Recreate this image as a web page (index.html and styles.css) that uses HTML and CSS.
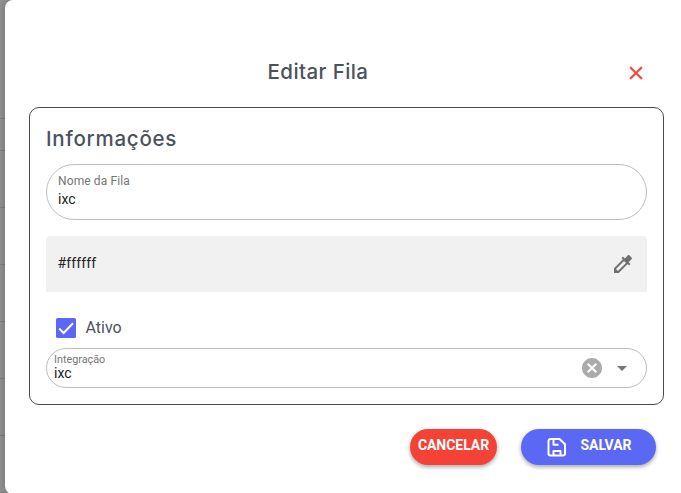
FILE: index.html
```html
<!DOCTYPE html>
<html lang="pt-BR">
<head>
<meta charset="utf-8">
<title>Editar Fila</title>
<link rel="stylesheet" href="styles.css">
</head>
<body>
<div class="backdrop">
  <div class="rows"><i class="head"></i><i class="sub"></i><i></i><i></i><i></i><i></i><i></i><i></i></div>
  <main class="dialog">
    <header class="header">
      <h1>Editar Fila</h1>
      <svg class="close" viewBox="0 0 24 24"><path d="M19 6.41 17.59 5 12 10.59 6.41 5 5 6.41 10.59 12 5 17.59 6.41 19 12 13.41 17.59 19 19 17.59 13.41 12z"/></svg>
    </header>
    <section class="card">
      <h2>Informações</h2>
      <div class="field name">
        <label>Nome da Fila</label>
        <span>ixc</span>
      </div>
      <div class="color">
        <span>#ffffff</span>
        <svg viewBox="0 0 24 24"><path d="M20.71 5.63l-2.34-2.34a1 1 0 0 0-1.41 0l-3.12 3.12-1.93-1.91-1.41 1.41 1.42 1.42L3 16.25V21h4.75l8.92-8.92 1.42 1.42 1.41-1.41-1.92-1.92 3.12-3.12c.4-.4.4-1.03.01-1.42zM6.92 19L5 17.08l8.06-8.06 1.92 1.92L6.92 19z"/></svg>
      </div>
      <div class="check">
        <svg viewBox="0 0 20 20"><rect width="20" height="20" rx="1.5"/><path d="M3.2 10.5 7.6 15 17 5.2"/></svg>
        <span>Ativo</span>
      </div>
      <div class="field select">
        <div class="value">
          <label>Integração</label>
          <span>ixc</span>
        </div>
        <svg class="clear" viewBox="0 0 24 24"><path d="M12 2C6.47 2 2 6.47 2 12s4.47 10 10 10 10-4.47 10-10S17.53 2 12 2zm5 13.59L15.59 17 12 13.41 8.41 17 7 15.59 10.59 12 7 8.41 8.41 7 12 10.59 15.59 7 17 8.41 13.41 12 17 15.59z"/></svg>
        <svg class="arrow" viewBox="0 0 24 24"><path d="M7 10l5 5 5-5z"/></svg>
      </div>
    </section>
    <footer class="actions">
      <button class="cancel">CANCELAR</button>
      <button class="save">
        <svg viewBox="0 0 20 20"><path d="M3.5 2H12.5L18 7.2V16.5a2 2 0 0 1-2 2H3.5a2 2 0 0 1-2-2V4a2 2 0 0 1 2-2zM6.5 2V7.8H11.5M6.5 18V14H13.5V18"/></svg>
        <span>SALVAR</span>
      </button>
    </footer>
  </main>
</div>
</body>
</html>
```
FILE: styles.css
```css
* { box-sizing: border-box; }
body { margin: 0; overflow: hidden; font-family: Roboto, sans-serif; color: #212121; }
.backdrop { display: flex; width: 688px; height: 493px; background: #929292; }
.rows { width: 5px; flex: none; }
.rows i { display: block; height: 57px; border-bottom: 1px solid #7f7f7f; }
.rows .head { height: 119px; }
.rows .sub { height: 32px; }
.dialog { flex: none; width: 683px; height: 494px; padding: 0 24px; background: #fff; border-radius: 8px; box-shadow: 0 0 10px rgba(0, 0, 0, .25); }
.header { display: flex; align-items: center; height: 107px; padding-top: 38px; }
h1, h2 { margin: 0; font: 500 20.5px/24px Inter, sans-serif; color: #4b525c; }
h1 { width: 578px; margin-top: -2px; text-align: center; letter-spacing: .4px; }
.close { width: 22px; height: 22px; margin-left: 17.5px; fill: #f44336; stroke: #f44336; stroke-width: .4; }
.card { width: 635px; height: 298px; padding: 19px 16px 0; border: 1px solid #464c57; border-radius: 10px; }
h2 { letter-spacing: .75px; }
.field { border: 1px solid #bdbdbd; }
.name { height: 56px; margin-top: 13px; padding: 8px 11px; border-radius: 28px; }
.field label, .field span { display: block; }
.field label { color: #757575; }
.name label { font-size: 12px; line-height: 16px; letter-spacing: .12px; }
.name span { font-size: 14px; line-height: 20px; }
.color { display: flex; align-items: center; justify-content: space-between; height: 56px; margin-top: 16px; padding: 0 12.5px 2px 11.5px; border-radius: 4px 4px 0 0; background: #f1f1f1; font-size: 14px; letter-spacing: .15px; }
.color svg { width: 24px; height: 24px; margin-top: 2px; fill: #6f6f6f; }
.check { display: flex; align-items: center; gap: 9.5px; height: 20px; margin: 26px 0 0 10px; font-size: 16px; color: #4b525c; }
.check span { margin-top: -2px; }
.check svg { width: 20px; height: 20px; fill: #5b68f4; }
.check path { fill: none; stroke: #fff; stroke-width: 2; }
.select { display: flex; align-items: center; height: 40px; margin-top: 10px; padding: 0 12px 0 7px; border-radius: 20px; }
.value { flex: 1; margin-top: -2px; }
.select label { font-size: 10.8px; line-height: 13px; }
.select span { font-size: 14px; line-height: 15px; }
.select svg { width: 24px; height: 24px; }
.clear { margin-right: 6px; fill: #ababab; }
.arrow { fill: #757575; }
.actions { display: flex; justify-content: flex-end; gap: 24px; padding: 24px 8px 0 0; }
button { display: flex; align-items: center; justify-content: center; height: 36px; padding: 0 0 4px; border: 0; border-radius: 18px; color: #fff; font: 700 14px/20px Roboto, sans-serif; letter-spacing: -.05px; box-shadow: 0 2px 4px rgba(0, 0, 0, .35); }
.cancel { width: 87px; background: #f44336; }
.save { width: 135px; gap: 14px; padding-left: 1px; background: #5b68f4; }
.save svg { width: 20px; height: 20px; margin-top: 4px; fill: none; stroke: #fff; stroke-width: 2; stroke-linejoin: round; }
```
